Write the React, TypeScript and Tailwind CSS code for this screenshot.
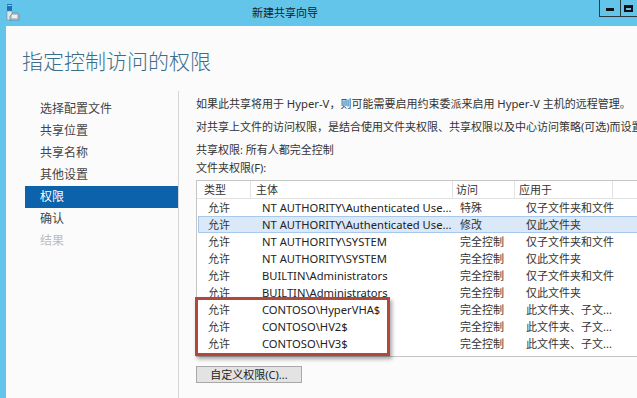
import React from "react";

const font = { fontFamily: '"Noto Sans", "Noto Sans CJK SC", sans-serif' };

const rows = [
  ["允许", "NT AUTHORITY\\Authenticated Use...", "特殊", "仅子文件夹和文件"],
  ["允许", "NT AUTHORITY\\Authenticated Use...", "修改", "仅此文件夹"],
  ["允许", "NT AUTHORITY\\SYSTEM", "完全控制", "仅子文件夹和文件"],
  ["允许", "NT AUTHORITY\\SYSTEM", "完全控制", "仅此文件夹"],
  ["允许", "BUILTIN\\Administrators", "完全控制", "仅子文件夹和文件"],
  ["允许", "BUILTIN\\Administrators", "完全控制", "仅此文件夹"],
  ["允许", "CONTOSO\\HyperVHA$", "完全控制", "此文件夹、子文..."],
  ["允许", "CONTOSO\\HV2$", "完全控制", "此文件夹、子文..."],
  ["允许", "CONTOSO\\HV3$", "完全控制", "此文件夹、子文..."],
];

const nav = ["选择配置文件", "共享位置", "共享名称", "其他设置", "权限", "确认", "结果"];

export default function App() {
  return (
    <div
      className="w-[637px] h-[398px] overflow-hidden bg-[#63c5ea] flex flex-col text-[11px] text-[#333]"
      style={font}
    >
      {/* Title bar */}
      <div className="h-[26px] flex items-start shrink-0">
        <svg className="ml-[6px] mt-[4px]" width="14" height="17" viewBox="0 0 14 17">
          <rect x="1" y="0" width="5" height="7" fill="#1f6fb8" />
          <rect x="1.5" y="1" width="4" height="1" fill="#9fd3f2" />
          <rect x="1" y="7" width="5" height="9" fill="#dfe6ea" stroke="#7f8a92" strokeWidth="0.6" />
          <path d="M4 12 L7 9 L12 9 L13 11 L13 16 L4 16 Z" fill="#b9c3c9" stroke="#6c7780" strokeWidth="0.6" />
          <rect x="6" y="11" width="5" height="3" fill="#eef2f4" />
        </svg>
        <div className="ml-[232px] mt-[5px] text-[11px] text-[#1a1a1a] leading-[16px]">新建共享向导</div>
        <div className="ml-auto flex">
          <div className="w-[22px] h-[17px] border border-t-0 border-[#2b3a42] flex items-center justify-center">
            <div className="w-[8px] h-[3px] bg-[#111] mt-[3px]" />
          </div>
          <div className="w-[16px] h-[17px] border border-t-0 border-l-0 border-r-0 border-[#2b3a42] pl-[3px] pt-[5px]">
            <div className="w-[9px] h-[7px] border-2 border-t-[3px] border-[#111]" />
          </div>
        </div>
      </div>

      {/* Body */}
      <div className="flex-1 ml-[6px] bg-[#fbfbfb] flex flex-col">
        <div
          className="pl-[16px] pt-[20px] h-[65px] text-[21px] leading-[28px] text-[#3b6e8b]"
          style={{ fontFamily: '"Noto Sans CJK SC", sans-serif', fontWeight: 300 }}
        >
          指定控制访问的权限
        </div>
        <div className="flex flex-1">
          {/* Nav */}
          <div className="w-[173px] border-r border-[#d6d6d6] pt-[7px] pl-[19px] shrink-0 text-[12px]">
            {nav.map((n, i) => (
              <div
                key={n}
                className={
                  "h-[22px] leading-[22px] pl-[15px] " +
                  (i === 4
                    ? "bg-[#0d63ab] text-white"
                    : i === 6
                    ? "text-[#bdbdbd]"
                    : "text-[#444]")
                }
              >
                {n}
              </div>
            ))}
          </div>

          {/* Right */}
          <div className="pl-[17px] flex flex-col whitespace-nowrap overflow-hidden">
            <div className="h-[22px] leading-[22px] mt-[2px]">
              如果此共享将用于 <span className="text-[11.3px]">Hyper-V</span>，则可能需要启用约束委派来启用{" "}
              <span className="text-[11.3px]">Hyper-V</span> 主机的远程管理。
            </div>
            <div className="h-[22px] leading-[22px] mt-[1px]">
              对共享上文件的访问权限，是结合使用文件夹权限、共享权限以及中心访问策略(可选)而设置的。
            </div>
            <div className="h-[18px] leading-[18px] mt-[3px]">共享权限: 所有人都完全控制</div>
            <div className="h-[18px] leading-[18px]">文件夹权限(F):</div>

            {/* Table */}
            <div className="relative mt-[3px] w-[470px] h-[177px] border border-[#c6c6c6] bg-white">
              <div className="flex h-[18px] leading-[18px] border-b border-[#e3e3e3]">
                <div className="w-[54px] pl-[7px] border-r border-[#e3e3e3]">类型</div>
                <div className="w-[202px] pl-[5px] border-r border-[#e3e3e3]">主体</div>
                <div className="w-[62px] pl-[3px] border-r border-[#e3e3e3]">访问</div>
                <div className="w-[98px] pl-[4px] border-r border-[#e3e3e3]">应用于</div>
                <div className="flex-1" />
              </div>
              {rows.map((r, i) => (
                <div
                  key={i}
                  className={
                    "flex h-[17px] leading-[15px] ml-[1px] " +
                    (i === 1 ? "bg-[#dae8f7] border border-[#a9c9ec]" : "border border-transparent")
                  }
                >
                  <div className="w-[53px] pl-[9px]">{r[0]}</div>
                  <div className="w-[202px] pl-[10px] text-[#222] text-[11.2px]">{r[1]}</div>
                  <div className="w-[62px] pl-[6px]">{r[2]}</div>
                  <div className="w-[98px] pl-[10px]">{r[3]}</div>
                </div>
              ))}
              <div className="absolute left-[-2px] top-[116px] w-[195px] h-[59px] border-[3px] border-[#b0493b] shadow-[2px_3px_4px_rgba(0,0,0,0.35)]" />
            </div>

            <div className="mt-[9px] w-[106px] h-[17px] leading-[15px] border border-[#a9a9a9] bg-[#e3e3e3] text-center text-[#222]">
              自定义权限(C)...
            </div>
          </div>
        </div>
      </div>
    </div>
  );
}
